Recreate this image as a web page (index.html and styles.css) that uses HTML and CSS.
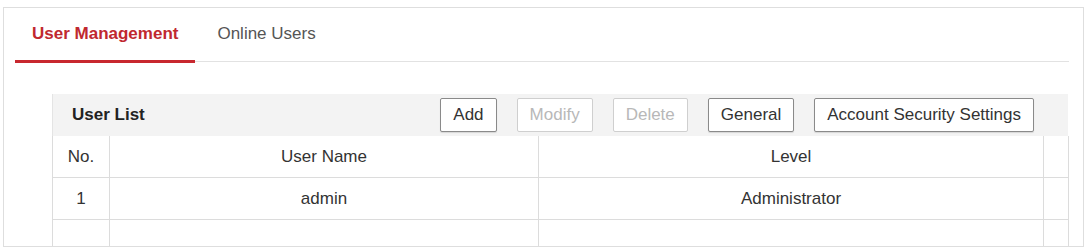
FILE: index.html
```html
<!DOCTYPE html>
<html>
<head>
<meta charset="utf-8">
<link rel="stylesheet" href="styles.css">
</head>
<body>
<div class="panel">
  <div class="tabs">
    <div class="tab active">User Management</div>
    <div class="tab">Online Users</div>
  </div>
  <div class="list">
    <div class="list-head">
      <div class="list-title">User List</div>
      <div class="actions">
        <button class="btn">Add</button>
        <button class="btn disabled">Modify</button>
        <button class="btn disabled">Delete</button>
        <button class="btn">General</button>
        <button class="btn">Account Security Settings</button>
      </div>
    </div>
    <table class="grid">
      <colgroup>
        <col class="c-no"><col class="c-name"><col class="c-level"><col class="c-pad">
      </colgroup>
      <tr><td>No.</td><td>User Name</td><td>Level</td><td></td></tr>
      <tr><td>1</td><td>admin</td><td>Administrator</td><td></td></tr>
      <tr class="last"><td></td><td></td><td></td><td></td></tr>
    </table>
  </div>
</div>
</body>
</html>
```

FILE: styles.css
```css
html, body {
  margin: 0;
  padding: 0;
  background: #ffffff;
}
body {
  font-family: "Liberation Sans", Arial, sans-serif;
  font-size: 17px;
  color: #333333;
  padding-top: 7px;
  padding-left: 3px;
  padding-right: 3px;
}
.panel {
  border: 1px solid #dedede;
  height: 240px;
  box-sizing: border-box;
  overflow: hidden;
  padding: 0 14px 0 11px;
}
.tabs {
  display: flex;
  border-bottom: 1px solid #e2e2e2;
  height: 54px;
  box-sizing: border-box;
}
.tab {
  padding: 16px 17px 0 17px;
  line-height: 20px;
  color: #555555;
  margin-right: 5px;
  box-sizing: border-box;
  height: 55px;
}
.tab.active {
  color: #c0282f;
  font-weight: bold;
  border-bottom: 3px solid #c8282f;
}
.list {
  margin-top: 32px;
  margin-left: 37px;
  width: 1016px;
}
.list-head {
  display: flex;
  align-items: center;
  justify-content: space-between;
  height: 42px;
  background: #f3f3f3;
  border-left: 1px solid #e4e4e4;
  padding: 0 34px 0 19px;
}
.list-title {
  font-weight: bold;
  color: #222222;
}
.actions {
  display: flex;
  gap: 20px;
}
.btn {
  font-family: "Liberation Sans", Arial, sans-serif;
  font-size: 17px;
  color: #333333;
  background: #ffffff;
  border: 1px solid #8a8a8a;
  border-radius: 2px;
  height: 34px;
  padding: 0 12px;
  box-shadow: 0 1px 1px rgba(0,0,0,0.12);
}
.btn.disabled {
  color: #b8b8b8;
  border-color: #cfcfcf;
  box-shadow: none;
}
.grid {
  border-collapse: collapse;
  table-layout: fixed;
  width: 1016px;
}
.c-no { width: 57px; }
.c-name { width: 429px; }
.c-level { width: 505px; }
.c-pad { width: 25px; }
.grid td {
  border: 1px solid #dcdcdc;
  height: 41px;
  padding: 0;
  text-align: center;
  color: #333333;
}
.grid tr:first-child td {
  border-top: none;
}
```
